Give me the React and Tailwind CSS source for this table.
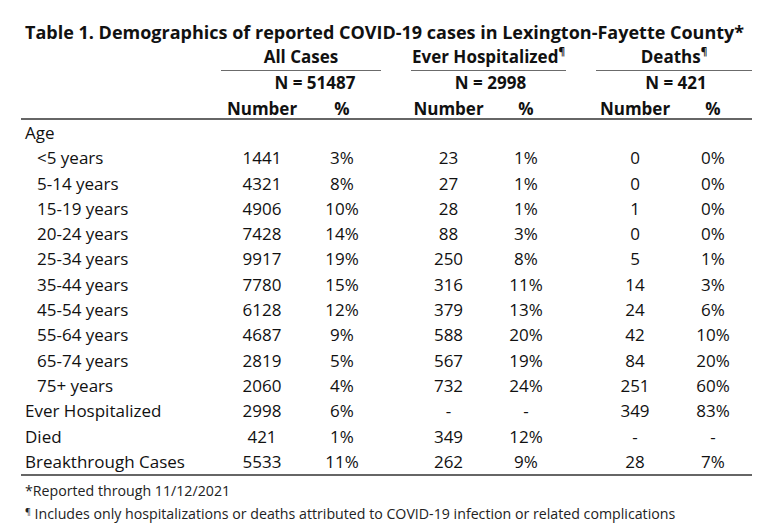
const ages = [
  ['<5 years', '1441', '3%', '23', '1%', '0', '0%'],
  ['5-14 years', '4321', '8%', '27', '1%', '0', '0%'],
  ['15-19 years', '4906', '10%', '28', '1%', '1', '0%'],
  ['20-24 years', '7428', '14%', '88', '3%', '0', '0%'],
  ['25-34 years', '9917', '19%', '250', '8%', '5', '1%'],
  ['35-44 years', '7780', '15%', '316', '11%', '14', '3%'],
  ['45-54 years', '6128', '12%', '379', '13%', '24', '6%'],
  ['55-64 years', '4687', '9%', '588', '20%', '42', '10%'],
  ['65-74 years', '2819', '5%', '567', '19%', '84', '20%'],
  ['75+ years', '2060', '4%', '732', '24%', '251', '60%'],
];

const totals = [
  ['Ever Hospitalized', '2998', '6%', '-', '-', '349', '83%'],
  ['Died', '421', '1%', '349', '12%', '-', '-'],
  ['Breakthrough Cases', '5533', '11%', '262', '9%', '28', '7%'],
];

const cols = 'grid grid-cols-[200px_82px_78px_30px_75px_80px_30px_78px_78px]';

const Row = ({ cells, indent }) => (
  <div className={`${cols} h-[25.3px] items-center`}>
    <div className={indent ? 'pl-4' : 'pl-1'}>{cells[0]}</div>
    <div className="text-center">{cells[1]}</div>
    <div className="text-center">{cells[2]}</div>
    <div />
    <div className="text-center">{cells[3]}</div>
    <div className="text-center">{cells[4]}</div>
    <div />
    <div className="text-center">{cells[5]}</div>
    <div className="text-center">{cells[6]}</div>
  </div>
);

const App = () => {
  return (
    <div className="w-[768px] h-[527px] bg-white text-[#111] font-['Open_Sans',sans-serif] text-[17px] pl-[21px] pt-[20px] overflow-hidden">
      <h1 className="pl-1 font-bold text-[18px] leading-6 whitespace-nowrap">
        Table 1. Demographics of reported COVID-19 cases in Lexington-Fayette County*
      </h1>

      <div className="w-[731px] font-bold">
        <div className={`${cols} h-[26px]`}>
          <div />
          <div className="col-span-2 flex items-center justify-center border-b border-[#6b6b6b]">All Cases</div>
          <div />
          <div className="col-span-2 flex items-center justify-center border-b border-[#6b6b6b]">
            Ever Hospitalized<sup className="text-[10px] -top-[6px]">¶</sup>
          </div>
          <div />
          <div className="col-span-2 flex items-center justify-center border-b border-[#6b6b6b]">
            Deaths<sup className="text-[10px] -top-[6px]">¶</sup>
          </div>
        </div>
        <div className={`${cols} h-[26px] items-center`}>
          <div />
          <div className="col-span-2 text-center pl-7">N = 51487</div>
          <div />
          <div className="col-span-2 text-center pl-1">N = 2998</div>
          <div />
          <div className="col-span-2 text-center pl-1">N = 421</div>
        </div>
        <div className={`${cols} h-[24px] items-center border-b-2 border-[#666]`}>
          <div />
          <div className="text-center">Number</div>
          <div className="text-center">%</div>
          <div />
          <div className="text-center">Number</div>
          <div className="text-center">%</div>
          <div />
          <div className="text-center">Number</div>
          <div className="text-center">%</div>
        </div>
      </div>

      <div className="w-[731px] border-b-2 border-[#666]">
        <div className={`${cols} h-[25.3px] items-center`}>
          <div className="pl-1">Age</div>
        </div>
        {ages.map((r) => (
          <Row key={r[0]} cells={r} indent />
        ))}
        {totals.map((r) => (
          <Row key={r[0]} cells={r} />
        ))}
      </div>

      <div className="pl-1 text-[14.2px] text-[#222] mt-[3px] leading-[23px]">
        <p>*Reported through 11/12/2021</p>
        <p>
          <sup className="text-[9px]">¶</sup> Includes only hospitalizations or deaths attributed to COVID-19 infection or related complications
        </p>
      </div>
    </div>
  );
};

export default App;
